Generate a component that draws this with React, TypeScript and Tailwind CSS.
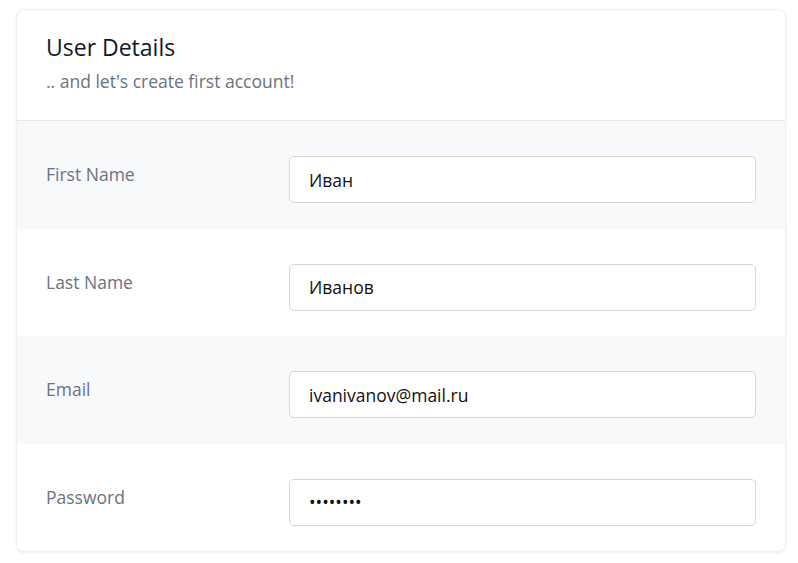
const fields = [
  { label: 'First Name', value: 'Иван', type: 'text' },
  { label: 'Last Name', value: 'Иванов', type: 'text' },
  { label: 'Email', value: 'ivanivanov@mail.ru', type: 'email' },
  { label: 'Password', value: 'password', type: 'password' },
]

export default function App() {
  return (
    <div className="min-h-[563px] bg-white pl-4 pr-3 pt-[9px] font-['Open_Sans',sans-serif]">
      <div className="overflow-hidden rounded-lg border border-[#f0f0f2] bg-white shadow-[0_1px_3px_rgba(0,0,0,0.08)]">
        <div className="border-b border-[#e4e6ea] px-[29px] pt-[22px] pb-[26px]">
          <h1 className="text-[23px] leading-[30px] text-[#111827]">User Details</h1>
          <p className="mt-[6px] text-[17.5px] leading-[26px] text-[#6b7280]">.. and let's create first account!</p>
        </div>
        {fields.map((f, i) => (
          <div
            key={f.label}
            className={`grid grid-cols-[243px_1fr] px-[29px] pt-[35px] pb-[25.5px] ${i % 2 === 0 ? 'bg-[#f8f9fb]' : 'bg-white'}`}
          >
            <label className="pt-[5px] text-[17.5px] leading-[26px] text-[#6b7280]">{f.label}</label>
            <input
              type={f.type}
              defaultValue={f.value}
              className="h-[47px] w-full rounded-[5px] border border-[#d4d6db] bg-white px-[19px] text-[17.5px] text-[#111111] outline-none"
            />
          </div>
        ))}
      </div>
    </div>
  )
}
